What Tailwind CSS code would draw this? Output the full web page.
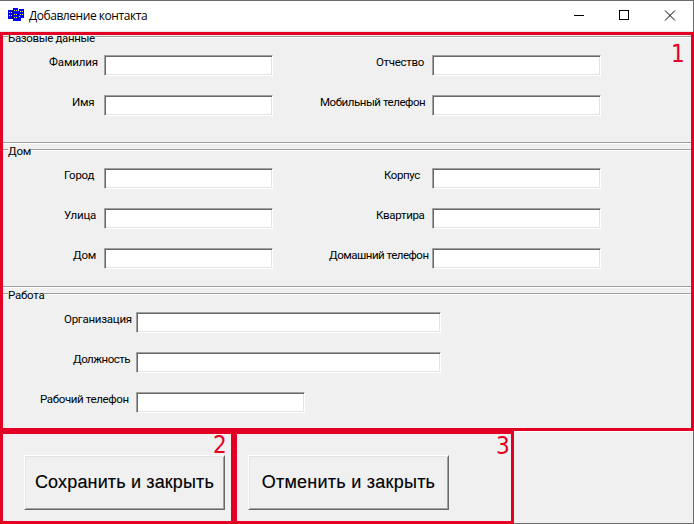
<!DOCTYPE html>
<html lang="ru"><head><meta charset="utf-8"><title>Добавление контакта</title>
<script src="https://cdn.jsdelivr.net/npm/@tailwindcss/browser@4"></script></head>
<body class="w-[694px] h-[524px] overflow-hidden bg-[#f0f0f0] text-black font-[Roboto,sans-serif] text-[11.5px] leading-[14px] tracking-[-0.25px] whitespace-nowrap">
<div class="relative w-[694px] h-[524px] flex flex-col border-t border-r border-b border-[#6b6b6b]">
  <header class="h-[31px] shrink-0 flex items-center bg-white border-b border-[#e8e8e8]">
    <svg class="ml-2 -mt-[2px] w-4 h-[14px] shrink-0" viewBox="0 0 16 14" shape-rendering="crispEdges"><path fill="#00f" d="M0 2h5V0h5v3h1V1h5v9h-3v3H5v-2H0z"/><path fill="#000080" d="M4 2h1v9H4zM9 4h1v9H9zM15 1h1v9h-1z"/><path fill="#ff0" d="M1 4h1v1H1zM3 4h1v1H3zM1 7h1v1H1zM3 7h1v1H3zM6 2h1v1H6zM8 2h1v1H8zM6 6h1v1H6zM8 6h1v1H8zM6 9h1v1H6zM8 9h1v1H8zM12 3h1v1h-1zM14 3h1v1h-1zM12 6h1v1h-1zM14 6h1v1h-1zM11 8h1v1h-1z"/></svg>
    <h1 class="ml-[5px] font-['Open_Sans',sans-serif] text-[12px] w-[530px] tracking-[-0.45px]">Добавление контакта</h1>
    <svg class="ml-[15px] -mt-px w-[102px] h-[11px]" viewBox="0 0 102 11" fill="none" stroke="#000"><path d="M0 5.5h10M45.500 .5h9v9h-9z" shape-rendering="crispEdges"/><path d="M91 .5l10 10M101 .5l-10 10"/></svg>
  </header>
  <main class="h-[399px] shrink-0 pt-1 overflow-hidden">
    <section class="h-[107px] border-t border-b border-[#a0a0a0] shadow-[0_1px_0_#fff,inset_0_1px_0_#fff]">
      <h2 class="h-[18px] pl-[8px]"><span class="inline-block relative -top-[6px] bg-[#f0f0f0] tracking-[-0.36px]">Базовые данные</span></h2>
      <div class="flex h-10">
        <label for="f1" class="w-[104px] pl-[49px] tracking-[-0.12px]">Фамилия</label><input id="f1" class="w-[169px] h-[21px] bg-white border border-t-[#a0a0a0] border-l-[#a0a0a0] border-b-white border-r-white shadow-[inset_1px_1px_0_#696969,inset_-1px_-1px_0_#e3e3e3]">
        <label for="f2" class="w-[159px] pl-[103px] tracking-[-0.32px]">Отчество</label><input id="f2" class="w-[169px] h-[21px] bg-white border border-t-[#a0a0a0] border-l-[#a0a0a0] border-b-white border-r-white shadow-[inset_1px_1px_0_#696969,inset_-1px_-1px_0_#e3e3e3]">
      </div>
      <div class="flex h-10">
        <label for="f3" class="w-[104px] pl-[72px]">Имя</label><input id="f3" class="w-[169px] h-[21px] bg-white border border-t-[#a0a0a0] border-l-[#a0a0a0] border-b-white border-r-white shadow-[inset_1px_1px_0_#696969,inset_-1px_-1px_0_#e3e3e3]">
        <label for="f4" class="w-[159px] pl-[47px] tracking-[-0.45px]">Мобильный телефон</label><input id="f4" class="w-[169px] h-[21px] bg-white border border-t-[#a0a0a0] border-l-[#a0a0a0] border-b-white border-r-white shadow-[inset_1px_1px_0_#696969,inset_-1px_-1px_0_#e3e3e3]">
      </div>
    </section>
    <section class="mt-[6px] h-[138px] border-t border-b border-[#a0a0a0] shadow-[0_1px_0_#fff,inset_0_1px_0_#fff]">
      <h2 class="h-[18px] pl-[8px]"><span class="inline-block relative -top-[6px] bg-[#f0f0f0]">Дом</span></h2>
      <div class="flex h-10">
        <label for="f5" class="w-[104px] pl-[64px]">Город</label><input id="f5" class="w-[169px] h-[21px] bg-white border border-t-[#a0a0a0] border-l-[#a0a0a0] border-b-white border-r-white shadow-[inset_1px_1px_0_#696969,inset_-1px_-1px_0_#e3e3e3]">
        <label for="f6" class="w-[159px] pl-[111px] tracking-[-0.4px]">Корпус</label><input id="f6" class="w-[169px] h-[21px] bg-white border border-t-[#a0a0a0] border-l-[#a0a0a0] border-b-white border-r-white shadow-[inset_1px_1px_0_#696969,inset_-1px_-1px_0_#e3e3e3]">
      </div>
      <div class="flex h-10">
        <label for="f7" class="w-[104px] pl-[64px]">Улица</label><input id="f7" class="w-[169px] h-[21px] bg-white border border-t-[#a0a0a0] border-l-[#a0a0a0] border-b-white border-r-white shadow-[inset_1px_1px_0_#696969,inset_-1px_-1px_0_#e3e3e3]">
        <label for="f8" class="w-[159px] pl-[103px] tracking-[-0.32px]">Квартира</label><input id="f8" class="w-[169px] h-[21px] bg-white border border-t-[#a0a0a0] border-l-[#a0a0a0] border-b-white border-r-white shadow-[inset_1px_1px_0_#696969,inset_-1px_-1px_0_#e3e3e3]">
      </div>
      <div class="flex h-10">
        <label for="f9" class="w-[104px] pl-[73px]">Дом</label><input id="f9" class="w-[169px] h-[21px] bg-white border border-t-[#a0a0a0] border-l-[#a0a0a0] border-b-white border-r-white shadow-[inset_1px_1px_0_#696969,inset_-1px_-1px_0_#e3e3e3]">
        <label for="f10" class="w-[159px] pl-[56px] tracking-[-0.5px]">Домашний телефон</label><input id="f10" class="w-[169px] h-[21px] bg-white border border-t-[#a0a0a0] border-l-[#a0a0a0] border-b-white border-r-white shadow-[inset_1px_1px_0_#696969,inset_-1px_-1px_0_#e3e3e3]">
      </div>
    </section>
    <section class="mt-[6px] h-[138px] border-t border-[#a0a0a0] shadow-[inset_0_1px_0_#fff]">
      <h2 class="h-[18px] pl-[8px]"><span class="inline-block relative -top-[6px] bg-[#f0f0f0]">Работа</span></h2>
      <div class="flex h-10"><label for="f11" class="w-[136px] pl-[64px]">Организация</label><input id="f11" class="w-[305px] h-[21px] bg-white border border-t-[#a0a0a0] border-l-[#a0a0a0] border-b-white border-r-white shadow-[inset_1px_1px_0_#696969,inset_-1px_-1px_0_#e3e3e3]"></div>
      <div class="flex h-10"><label for="f12" class="w-[136px] pl-[73px] tracking-[-0.5px]">Должность</label><input id="f12" class="w-[305px] h-[21px] bg-white border border-t-[#a0a0a0] border-l-[#a0a0a0] border-b-white border-r-white shadow-[inset_1px_1px_0_#696969,inset_-1px_-1px_0_#e3e3e3]"></div>
      <div class="flex h-10"><label for="f13" class="w-[136px] pl-[40px] tracking-[-0.36px]">Рабочий телефон</label><input id="f13" class="w-[169px] h-[21px] bg-white border border-t-[#a0a0a0] border-l-[#a0a0a0] border-b-white border-r-white shadow-[inset_1px_1px_0_#696969,inset_-1px_-1px_0_#e3e3e3]"></div>
    </section>
  </main>
  <footer class="flex-1 border-t border-white pt-[23px] pl-6 flex gap-[23px] items-start font-['Liberation_Sans',sans-serif] text-[18px]">
    <button class="w-[201px] h-[55px] pb-[2px] tracking-[0.15px] [-webkit-text-stroke:0.15px_#000] border border-t-white border-l-white border-b-[#696969] border-r-[#696969] shadow-[inset_1px_1px_0_#e3e3e3,inset_-1px_-1px_0_#a0a0a0]">Сохранить и закрыть</button>
    <button class="w-[201px] h-[55px] pb-[2px] tracking-[0.25px] [-webkit-text-stroke:0.15px_#000] border border-t-white border-l-white border-b-[#696969] border-r-[#696969] shadow-[inset_1px_1px_0_#e3e3e3,inset_-1px_-1px_0_#a0a0a0]">Отменить и закрыть</button>
  </footer>
</div>
<!-- numbered callout frames over the form -->
<div class="absolute left-0 top-[32px] w-[694px] h-[399px] border-3 border-[#e40024]"></div>
<div class="absolute left-0 top-[431px] w-[237px] h-[93px] border-3 border-r-6 border-[#e40024]"></div>
<div class="absolute left-[234px] top-[431px] w-[280px] h-[93px] border-3 border-[#e40024]"></div>
<div class="absolute left-[671px] top-[40px] font-['DejaVu_Sans_Condensed','DejaVu_Sans',sans-serif] text-[24px] leading-[28px] text-[#e40024]">1</div>
<div class="absolute left-[213px] top-[431px] font-['DejaVu_Sans_Condensed','DejaVu_Sans',sans-serif] text-[24px] leading-[28px] text-[#e40024]">2</div>
<div class="absolute left-[496px] top-[432px] font-['DejaVu_Sans_Condensed','DejaVu_Sans',sans-serif] text-[24px] leading-[28px] text-[#e40024]">3</div>
</body></html>
